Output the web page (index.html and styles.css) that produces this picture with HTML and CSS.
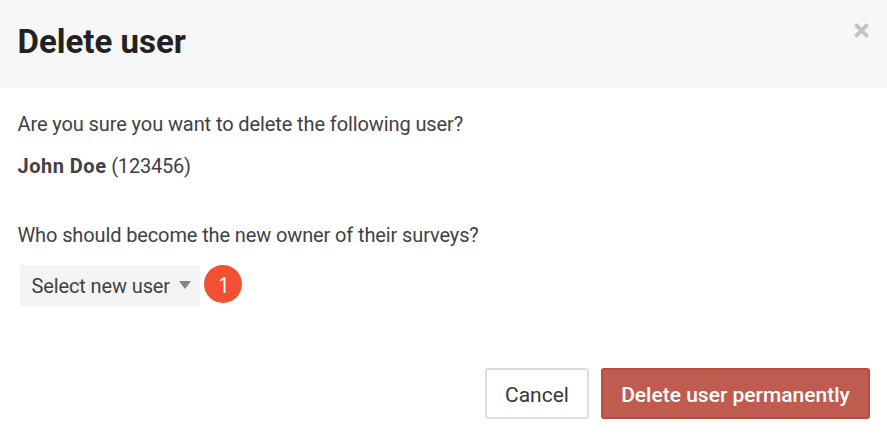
FILE: index.html
```
<!DOCTYPE html>
<html lang="en">
<head>
    <meta charset="UTF-8">
    <meta name="viewport" content="width=device-width, initial-scale=1.0">
    <title>Delete user</title>
    <link rel="stylesheet" href="styles.css">
</head>
<body>
    <div class="modal">
        <header class="modal-header">
            <h1>Delete user</h1>
            <button class="close" aria-label="Close">
                <svg width="15" height="15" viewBox="0 0 15 15">
                    <path d="M1.4 1.4L13.6 13.6M13.6 1.4L1.4 13.6"/>
                </svg>
            </button>
        </header>

        <div class="modal-body">
            <p class="question">Are you sure you want to delete the following user?</p>
            <p class="user"><strong>John Doe</strong> (123456)</p>
            <p class="owner">Who should become the new owner of their surveys?</p>
            <div class="owner-row">
                <button class="select">
                    <span>Select new user</span>
                    <i class="caret"></i>
                </button>
                <span class="marker">1</span>
            </div>
        </div>

        <footer class="modal-footer">
            <button class="btn btn-cancel">Cancel</button>
            <button class="btn btn-danger">Delete user permanently</button>
        </footer>
    </div>
</body>
</html>
```

FILE: styles.css
```
* {
    margin: 0;
    padding: 0;
    box-sizing: border-box;
}

body {
    font-family: Roboto, sans-serif;
    font-size: 20px;
    line-height: 24px;
    letter-spacing: -0.12px;
    color: #414145;
    background: #fff;
}

button {
    font: inherit;
    color: inherit;
    border: 0;
    background: none;
    white-space: nowrap;
    cursor: pointer;
}

.modal {
    height: 435px;
    display: flex;
    flex-direction: column;
}

.modal-header {
    height: 88px;
    padding: 22px 18px 0 17.5px;
    display: flex;
    justify-content: space-between;
    align-items: flex-start;
    background: #f7f7f7;
}

.modal-header h1 {
    font-size: 33px;
    line-height: 40px;
    letter-spacing: 0;
    font-weight: 700;
    color: #222;
}

.close {
    height: 15px;
    margin-top: 1px;
}

.close svg {
    display: block;
    fill: none;
    stroke: #c4c4c4;
    stroke-width: 3.8;
}

.modal-body {
    flex: 1;
    padding: 24px 17.5px 0;
}

.question {
    letter-spacing: -0.1px;
}

.user {
    margin-top: 18px;
    letter-spacing: -0.2px;
}

.user strong {
    letter-spacing: 0.5px;
}

.owner {
    margin-top: 45px;
}

.owner-row {
    display: flex;
    align-items: flex-start;
    gap: 4px;
    margin: 18px 0 0 2.5px;
}

.select {
    width: 180px;
    height: 41px;
    padding: 0 9px 0 11.5px;
    display: flex;
    align-items: center;
    justify-content: space-between;
    letter-spacing: -0.12px;
    background: #f4f4f4;
}

.caret {
    margin-bottom: 1px;
    border: 6px solid transparent;
    border-top: 8px solid #858585;
    border-bottom: 0;
}

.marker {
    width: 38px;
    height: 38px;
    padding-left: 2px;
    border-radius: 50%;
    font-family: "Open Sans", sans-serif;
    font-size: 21px;
    font-weight: 500;
    line-height: 40px;
    text-align: center;
    color: #fff;
    background: #f15034;
}

.modal-footer {
    display: flex;
    justify-content: flex-end;
    gap: 12px;
    padding: 0 17px 16px;
}

.btn {
    height: 51px;
    padding-top: 2px;
    border: 2px solid #ddd;
    border-radius: 3px;
    font-size: 21px;
    letter-spacing: 0;
}

.btn-cancel {
    width: 104px;
    color: #38383a;
}

.btn-danger {
    width: 269px;
    color: #fff;
    font-weight: 500;
    background: #c05b50;
    border-color: #b94a3e;
}
```
